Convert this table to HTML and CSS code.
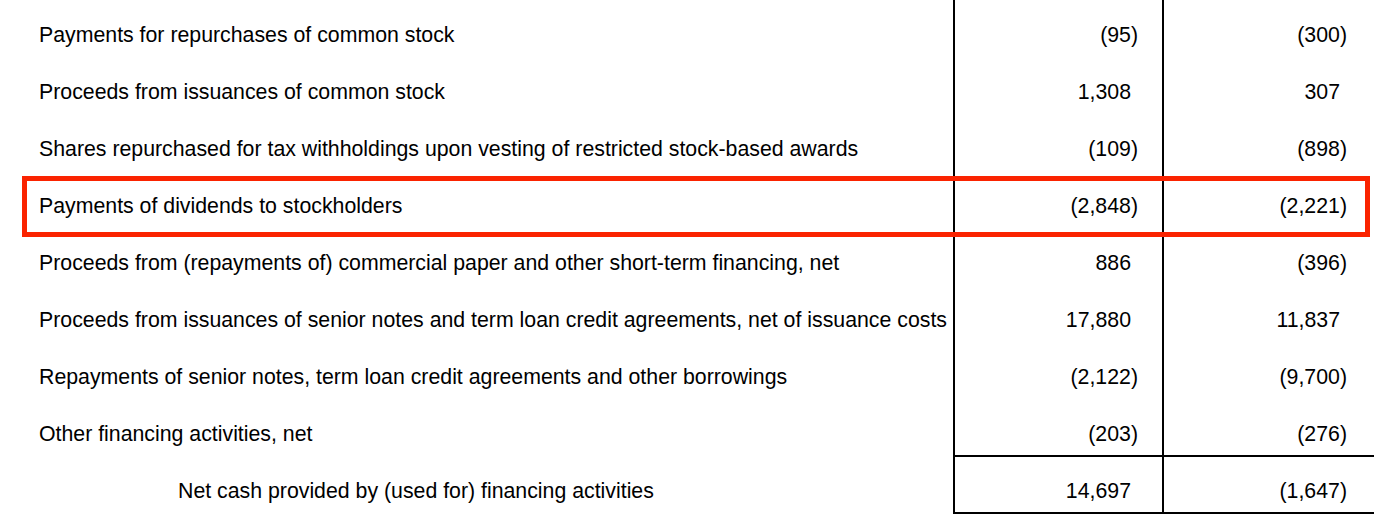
FILE: index.html
```html
<!DOCTYPE html>
<html lang="en">
<head>
<meta charset="utf-8">
<title>Financing activities</title>
<link rel="stylesheet" href="styles.css">
</head>
<body>
<div class="sheet">
  <table class="cash">
    <colgroup>
      <col class="c-label">
      <col class="c-num">
      <col class="c-num2">
    </colgroup>
    <tbody>
      <tr><td class="label">Payments for repurchases of common stock</td><td class="num neg">(95)</td><td class="num neg">(300)</td></tr>
      <tr><td class="label">Proceeds from issuances of common stock</td><td class="num pos">1,308</td><td class="num pos">307</td></tr>
      <tr><td class="label">Shares repurchased for tax withholdings upon vesting of restricted stock-based awards</td><td class="num neg">(109)</td><td class="num neg">(898)</td></tr>
      <tr><td class="label">Payments of dividends to stockholders</td><td class="num neg">(2,848)</td><td class="num neg">(2,221)</td></tr>
      <tr><td class="label">Proceeds from (repayments of) commercial paper and other short-term financing, net</td><td class="num pos">886</td><td class="num neg">(396)</td></tr>
      <tr><td class="label">Proceeds from issuances of senior notes and term loan credit agreements, net of issuance costs</td><td class="num pos">17,880</td><td class="num pos">11,837</td></tr>
      <tr><td class="label">Repayments of senior notes, term loan credit agreements and other borrowings</td><td class="num neg">(2,122)</td><td class="num neg">(9,700)</td></tr>
      <tr><td class="label">Other financing activities, net</td><td class="num neg">(203)</td><td class="num neg">(276)</td></tr>
      <tr class="total"><td class="label">Net cash provided by (used for) financing activities</td><td class="num pos">14,697</td><td class="num neg">(1,647)</td></tr>
    </tbody>
  </table>
  <div class="highlight" aria-hidden="true"></div>
</div>
</body>
</html>
```

FILE: styles.css
```css
html, body {
  margin: 0;
  padding: 0;
  background: #fff;
}

body {
  font-family: "Liberation Sans", Arial, sans-serif;
  font-size: 21.3px;
  color: #000;
  overflow: hidden;
}

.sheet {
  position: relative;
  width: 1400px;
}

.cash {
  border-collapse: collapse;
  table-layout: fixed;
  width: 1400px;
}

.c-label { width: 954px; }
.c-num { width: 209px; }
.c-num2 { width: 237px; }

.cash td {
  height: 57px;
  box-sizing: border-box;
  padding: 13px 0 0 0;
  vertical-align: middle;
  line-height: 22px;
  white-space: nowrap;
}

.cash td.label {
  padding-left: 39px;
}

.cash td.num {
  border-left: 2px solid #000;
  text-align: right;
}

.cash tr td.num.neg:nth-child(2) {
  padding-right: 24px;
}

.cash tr td.num.pos:nth-child(2) {
  padding-right: 31px;
}

.cash tr td.num.neg:last-child {
  padding-right: 53px;
}

.cash tr td.num.pos:last-child {
  padding-right: 60px;
}

.cash tr.total td.label {
  padding-left: 178px;
}

.cash tr.total td.num {
  border-top: 2px solid #000;
  border-bottom: 2px solid #000;
}

.highlight {
  position: absolute;
  left: 22px;
  top: 176px;
  width: 1348px;
  height: 61px;
  box-sizing: border-box;
  border: 5px solid #fa2300;
}
```
